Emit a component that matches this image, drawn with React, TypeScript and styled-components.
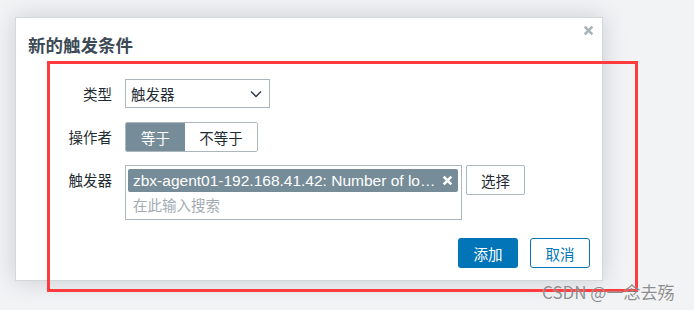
import styled, { createGlobalStyle } from 'styled-components';

const GlobalStyle = createGlobalStyle`
  html, body {
    margin: 0;
    padding: 0;
    background: #f2f3f5;
  }
  body {
    width: 694px;
    height: 310px;
    overflow: hidden;
    font-family: "Liberation Sans", "Noto Sans CJK SC", sans-serif;
  }
`;

function CloseIcon({ size, color }: { size: number; color: string }) {
  return (
    <svg width={size} height={size} viewBox="0 0 10 10">
      <path d="M1.5 1.5 L8.5 8.5 M8.5 1.5 L1.5 8.5" stroke={color} strokeWidth="2.4" />
    </svg>
  );
}

function Chevron() {
  return (
    <svg width="12" height="8" viewBox="0 0 12 8">
      <path d="M1 1.5 L6 6.5 L11 1.5" fill="none" stroke="#2a3540" strokeWidth="1.3" />
    </svg>
  );
}

function App() {
  return (
    <Page>
      <GlobalStyle />
      <Dialog>
        <Header>
          <Title>新的触发条件</Title>
          <CloseButton>
            <CloseIcon size={11} color="#a9b3ba" />
          </CloseButton>
        </Header>
        <Form>
          <Label>类型</Label>
          <Field>
            <Select>
              <span>触发器</span>
              <Chevron />
            </Select>
          </Field>

          <Label>操作者</Label>
          <Field>
            <Segmented>
              <SegButton $active $width={60}>等于</SegButton>
              <SegButton $width={73}>不等于</SegButton>
            </Segmented>
          </Field>

          <Label>触发器</Label>
          <Field>
            <MultiSelect>
              <Chip>
                <ChipText>zbx-agent01-192.168.41.42: Number of logged in users</ChipText>
                <CloseIcon size={11} color="#ffffff" />
              </Chip>
              <Placeholder>在此输入搜索</Placeholder>
            </MultiSelect>
            <PlainButton>选择</PlainButton>
          </Field>
        </Form>
        <Footer>
          <PrimaryButton>添加</PrimaryButton>
          <OutlineButton>取消</OutlineButton>
        </Footer>
      </Dialog>
      <Annotation />
      <Watermark>CSDN @一念去殇</Watermark>
    </Page>
  );
}

export default App;

const Page = styled.div`
  position: relative;
  width: 694px;
  height: 310px;
  padding: 17px 0 0 15px;
  box-sizing: border-box;
`;

const Dialog = styled.div`
  width: 588px;
  height: 264px;
  box-sizing: border-box;
  background: #fff;
  border: 1px solid #d3d8dc;
  box-shadow: 0 0 22px rgba(40, 55, 70, 0.2);
  display: flex;
  flex-direction: column;
`;

const Header = styled.div`
  height: 53px;
  display: flex;
  align-items: center;
  justify-content: space-between;
  padding: 0 8px 0 12px;
`;

const Title = styled.h2`
  margin: 0;
  font-family: "Noto Sans CJK SC", sans-serif;
  font-size: 17.5px;
  font-weight: 700;
  color: #3c4a55;
  line-height: 1;
`;

const CloseButton = styled.div`
  align-self: flex-start;
  margin-top: 7px;
  display: flex;
`;

const Form = styled.div`
  display: grid;
  grid-template-columns: 96px 1fr;
  column-gap: 13px;
  row-gap: 13px;
  padding-top: 8px;
`;

const Label = styled.div`
  text-align: right;
  font-family: "Noto Sans CJK SC", sans-serif;
  font-size: 14.5px;
  line-height: 30px;
  color: #1f2c33;
`;

const Field = styled.div`
  display: flex;
  align-items: flex-start;
  gap: 4px;
`;

const Select = styled.div`
  width: 145px;
  height: 29px;
  box-sizing: border-box;
  border: 1px solid #acb6bd;
  display: flex;
  align-items: center;
  justify-content: space-between;
  padding: 0 7px 0 5px;
  font-family: "Noto Sans CJK SC", sans-serif;
  font-size: 14.5px;
  color: #1f2c33;
`;

const Segmented = styled.div`
  display: flex;
  border: 1px solid #acb6bd;
  border-radius: 2px;
  overflow: hidden;
`;

const SegButton = styled.div<{ $active?: boolean; $width: number }>`
  width: ${p => p.$width - 1}px;
  height: 28px;
  display: flex;
  align-items: center;
  justify-content: center;
  font-family: "Noto Sans CJK SC", sans-serif;
  font-size: 14.5px;
  background: ${p => (p.$active ? '#768c98' : '#fff')};
  color: ${p => (p.$active ? '#fff' : '#1f2c33')};
`;

const MultiSelect = styled.div`
  width: 337px;
  height: 55px;
  box-sizing: border-box;
  border: 1px solid #acb6bd;
  padding: 3px 3px 0 2px;
  display: flex;
  flex-direction: column;
`;

const Chip = styled.div`
  height: 23px;
  background: #768c98;
  border-radius: 2px;
  display: flex;
  align-items: center;
  gap: 6px;
  padding: 0 5px 0 5px;
`;

const ChipText = styled.span`
  flex: 1;
  min-width: 0;
  overflow: hidden;
  white-space: nowrap;
  text-overflow: ellipsis;
  color: #fff;
  font-size: 15.5px;
  line-height: 23px;
`;

const Placeholder = styled.div`
  padding-left: 5px;
  margin-top: 2px;
  font-family: "Noto Sans CJK SC", sans-serif;
  font-size: 14.5px;
  line-height: 22px;
  color: #a3abb1;
`;

const PlainButton = styled.div`
  width: 59px;
  height: 30px;
  box-sizing: border-box;
  border: 1px solid #acb6bd;
  border-radius: 2px;
  display: flex;
  align-items: center;
  justify-content: center;
  font-family: "Noto Sans CJK SC", sans-serif;
  font-size: 14.5px;
  color: #1f2c33;
`;

const Footer = styled.div`
  margin-top: auto;
  display: flex;
  justify-content: flex-end;
  gap: 12px;
  padding: 0 12px 12px 0;
`;

const PrimaryButton = styled.div`
  width: 60px;
  height: 30px;
  box-sizing: border-box;
  border-radius: 3px;
  background: #0275b8;
  display: flex;
  align-items: center;
  justify-content: center;
  font-family: "Noto Sans CJK SC", sans-serif;
  font-size: 14.5px;
  color: #fff;
`;

const OutlineButton = styled(PrimaryButton)`
  background: #fff;
  border: 1px solid #0275b8;
  color: #0275b8;
`;

const Annotation = styled.div`
  position: absolute;
  left: 47px;
  top: 61px;
  width: 591px;
  height: 231px;
  box-sizing: border-box;
  border: 3px solid #ff3b3d;
  pointer-events: none;
`;

const Watermark = styled.div`
  position: absolute;
  left: 542px;
  top: 281px;
  font-family: "Noto Sans CJK SC", sans-serif;
  font-size: 17px;
  line-height: 22px;
  color: rgba(105, 105, 105, 0.75);
  text-shadow: 0 0 1px rgba(255, 255, 255, 0.7);
  white-space: nowrap;
`;
